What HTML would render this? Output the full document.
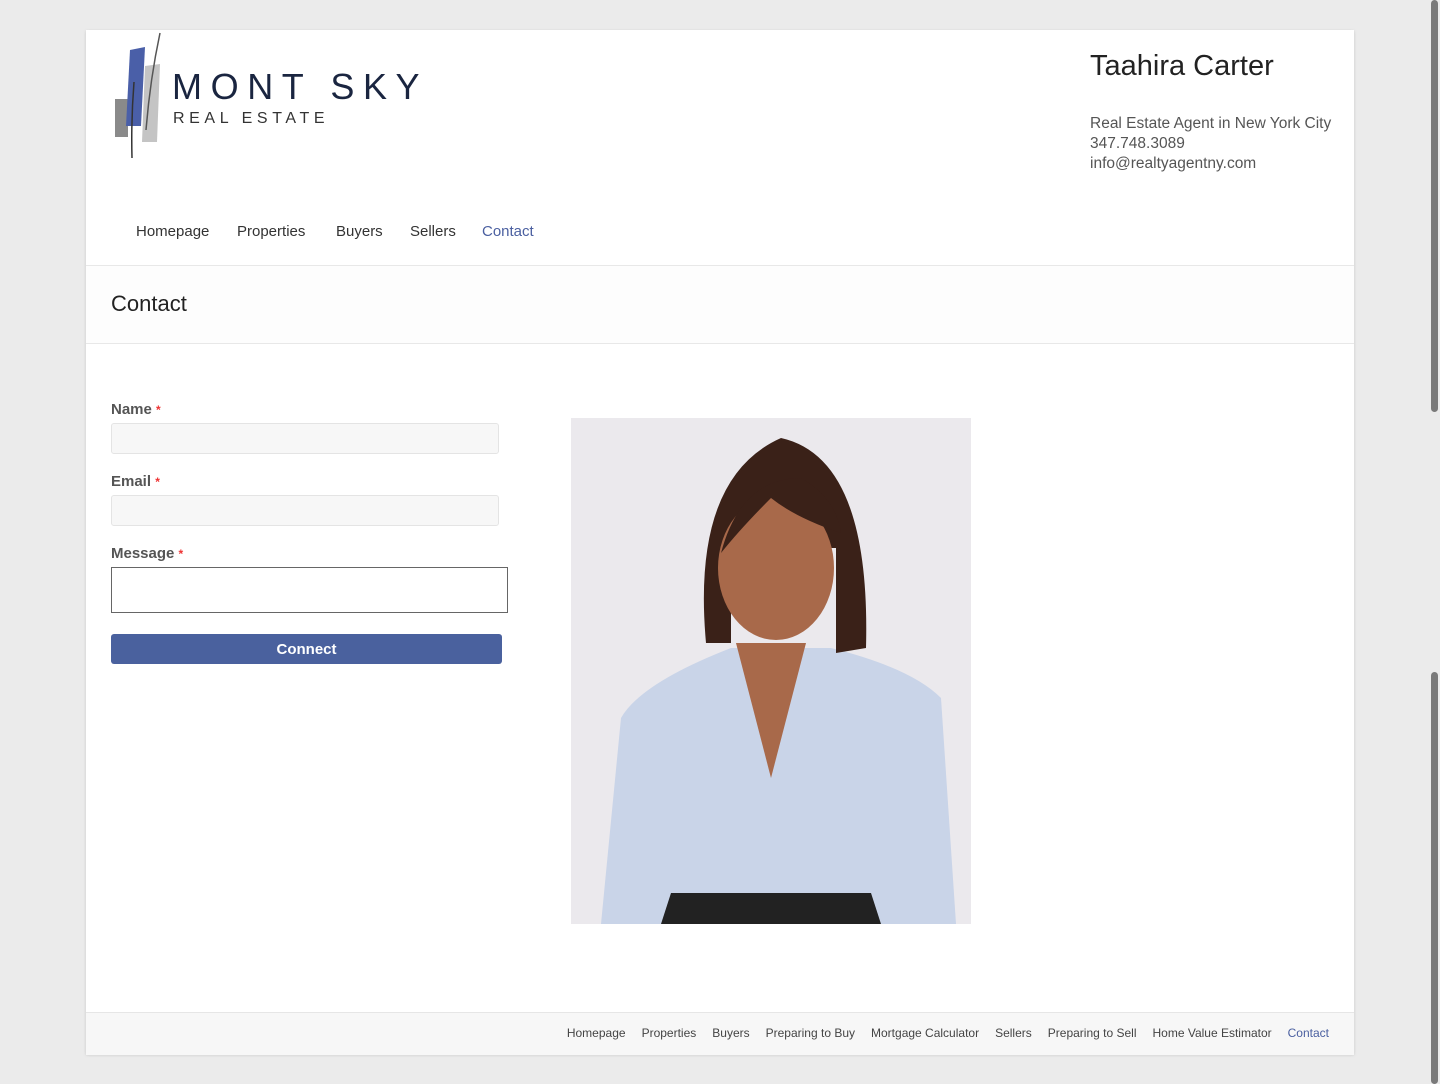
<!DOCTYPE html>
<html><head><meta charset="utf-8"><style>
body{margin:0;background:#ebebeb;font-family:"Liberation Sans",sans-serif;width:1440px;height:1084px;overflow:hidden;position:relative}
.wrap{position:absolute;left:86px;top:30px;width:1268px;height:1024px;background:#fff;box-shadow:0 1px 3px rgba(0,0,0,.15)}
.a{position:absolute}
.nav a{position:absolute;top:193px;font-size:15px;color:#333;text-decoration:none}
label{position:absolute;left:25px;font-size:15px;font-weight:bold;color:#555}
label span{color:#e33;font-size:12px}
.in{position:absolute;left:25px;width:386px;height:29px;background:#f7f7f7;border:1px solid #e4e4e4;border-radius:3px}
.foot a{font-size:12px;color:#444;margin-left:16px;text-decoration:none}
</style></head><body>
<div class="wrap">
<svg class="a" style="left:26px;top:0px" width="52" height="132">
<polygon points="3,69 16,69 16,107 3,107" fill="#8a8a8a"/>
<polygon points="18,20 33,17 29,96 14,96" fill="#4a5fa8"/>
<polygon points="33,36 48,34 45,112 30,112" fill="#c4c4c4"/>
<path d="M48 3 Q38 50 34 100" stroke="#555" stroke-width="1.5" fill="none"/>
<path d="M22 52 Q19 90 20 128" stroke="#333" stroke-width="1.5" fill="none"/>
</svg>
<div class="a" style="left:86px;top:36px;font-size:36px;letter-spacing:8.6px;color:#1a2540">MONT SKY</div>
<div class="a" style="left:87px;top:80px;font-size:16px;letter-spacing:4.6px;color:#333">REAL ESTATE</div>
<div class="a" style="left:1004px;top:20px;font-size:29px;color:#222">Taahira Carter</div>
<div class="a" style="left:1004px;top:84px;font-size:15.5px;line-height:20px;color:#555">Real Estate Agent in New York City<br>347.748.3089<br>info@realtyagentny.com</div>
<div class="nav"><a style="left:50px">Homepage</a><a style="left:151px">Properties</a><a style="left:250px">Buyers</a><a style="left:324px">Sellers</a><a style="left:396px;color:#4a5fa0">Contact</a></div>
<div class="a" style="left:0;top:235px;width:1268px;height:77px;background:#fdfdfd;border-top:1px solid #e8e8e8;border-bottom:1px solid #e8e8e8"></div>
<div class="a" style="left:25px;top:261px;font-size:22px;color:#222">Contact</div>
<label style="top:371px">Name <span>*</span></label><div class="in" style="top:393px"></div>
<label style="top:443px">Email <span>*</span></label><div class="in" style="top:465px"></div>
<label style="top:515px">Message <span>*</span></label>
<div class="a" style="left:25px;top:537px;width:395px;height:44px;border:1px solid #666"></div>
<div class="a" style="left:25px;top:604px;width:391px;height:30px;background:#4a619e;border-radius:3px;color:#fff;font-weight:bold;font-size:15px;text-align:center;line-height:31px">Connect</div>
<svg class="a" style="left:485px;top:388px" width="400" height="506">
<rect width="400" height="506" fill="#ebe9ed"/>
<path d="M30 506 L50 300 Q70 265 160 230 L260 230 Q340 250 370 280 L385 506Z" fill="#c9d4e8"/>
<path d="M165 225 L200 360 L235 225Z" fill="#a8694a"/>
<path d="M135 225 Q120 60 210 20 Q300 40 295 230 L265 235 L265 130 L160 130 L160 225Z" fill="#3a2118"/>
<ellipse cx="205" cy="150" rx="58" ry="72" fill="#a8694a"/>
<path d="M150 135 Q170 60 230 60 Q265 80 270 115 Q225 100 200 80 Q170 110 150 135Z" fill="#3a2118"/>
<path d="M90 506 L100 475 L300 475 L310 506Z" fill="#222"/>
</svg>
<div class="a" style="left:0;top:982px;width:1268px;height:42px;background:#f7f7f7;border-top:1px solid #e6e6e6"></div>
<div class="a foot" style="right:25px;top:994px;white-space:nowrap"><a>Homepage</a><a>Properties</a><a>Buyers</a><a>Preparing to Buy</a><a>Mortgage Calculator</a><a>Sellers</a><a>Preparing to Sell</a><a>Home Value Estimator</a><a style="color:#4a5fa0">Contact</a></div>
</div>
<div class="a" style="left:1431px;top:0;width:7px;height:412px;background:#7a7a7a;border-radius:4px"></div>
<div class="a" style="left:1431px;top:672px;width:7px;height:412px;background:#7a7a7a;border-radius:4px"></div>
</body></html>
